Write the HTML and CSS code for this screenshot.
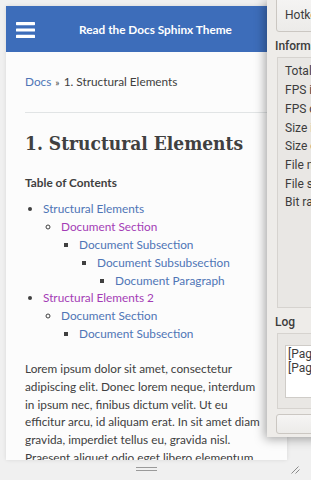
FILE: index.html
```html
<!DOCTYPE html>
<html>
<head>
<meta charset="utf-8">
<link rel="stylesheet" href="styles.css">
</head>
<body>
<div class="frame">
  <div class="page">
    <header class="nav-top">
      <svg class="burger" width="19" height="16" viewBox="0 0 19 16"><rect x="0" y="0" width="19" height="3.2" rx="0.6" fill="#fff"/><rect x="0" y="6.4" width="19" height="3.2" rx="0.6" fill="#fff"/><rect x="0" y="12.8" width="19" height="3.2" rx="0.6" fill="#fff"/></svg>
      <a class="project">Read the Docs Sphinx Theme</a>
    </header>
    <main class="content">
      <div class="breadcrumbs"><a class="link">Docs</a> <span class="raquo">»</span> 1. Structural Elements</div>
      <hr class="rule">
      <h1 class="title">1. Structural Elements</h1>
      <p class="toc-title">Table of Contents</p>
      <ul class="toc l1">
        <li><a class="link">Structural Elements</a>
          <ul class="toc l2">
            <li><a class="visited">Document Section</a>
              <ul class="toc l3">
                <li><a class="link">Document Subsection</a>
                  <ul class="toc l3">
                    <li><a class="link">Document Subsubsection</a>
                      <ul class="toc l3">
                        <li><a class="link">Document Paragraph</a></li>
                      </ul>
                    </li>
                  </ul>
                </li>
              </ul>
            </li>
          </ul>
        </li>
        <li><a class="visited">Structural Elements 2</a>
          <ul class="toc l2">
            <li><a class="link">Document Section</a>
              <ul class="toc l3">
                <li><a class="link">Document Subsection</a></li>
              </ul>
            </li>
          </ul>
        </li>
      </ul>
      <p class="para">Lorem ipsum dolor sit amet, consectetur adipiscing elit. Donec lorem neque, interdum in ipsum nec, finibus dictum velit. Ut eu efficitur arcu, id aliquam erat. In sit amet diam gravida, imperdiet tellus eu, gravida nisl. Praesent aliquet odio eget libero elementum, quis rhoncus tellus tincidunt.</p>
    </main>
  </div>
  <div class="statusbar">
    <span class="grip"></span>
    <svg class="resize" width="9" height="8" viewBox="0 0 9 8"><line x1="0.5" y1="7.5" x2="7.5" y2="0.5" stroke="#8a8a8a" stroke-width="1"/><line x1="4.5" y1="7.5" x2="8.5" y2="3.5" stroke="#8a8a8a" stroke-width="1"/></svg>
  </div>
</div>
<aside class="panel">
  <div class="btn hotkeys">Hotkeys</div>
  <div class="group-label">Information</div>
  <div class="group info">
    <div class="row">Total frames</div>
    <div class="row">FPS in</div>
    <div class="row">FPS out</div>
    <div class="row">Size in</div>
    <div class="row">Size out</div>
    <div class="row">File name</div>
    <div class="row">File size</div>
    <div class="row">Bit rate</div>
  </div>
  <div class="group-label">Log</div>
  <div class="group log">
    <div class="log-text">[Page loaded]<br>[Page rendered]</div>
  </div>
  <div class="btn bottom-btn"></div>
</aside>
</body>
</html>
```
FILE: styles.css
```css
html, body {
  margin: 0;
  padding: 0;
  overflow: hidden;
}
body {
  width: 311px;
  height: 480px;
  background: #f0f0f0;
  font-family: Lato, "Noto Sans", sans-serif;
  color: #404040;
  position: relative;
}
.frame {
  display: flex;
  flex-direction: column;
  padding: 6px 24px 0 6px;
  height: 480px;
  box-sizing: border-box;
}
.page {
  height: 454px;
  background: #fcfcfc;
  overflow: hidden;
  box-shadow: 0 0 4px rgba(0,0,0,0.10);
}
.nav-top {
  height: 46px;
  background: #3d6dba;
  display: flex;
  align-items: center;
  padding: 0 11px 0 10px;
}
.burger {
  display: block;
  margin-top: 1px;
}
.project {
  flex: 1;
  text-align: center;
  color: #fff;
  font-weight: 700;
  font-size: 11.8px;
}
.content {
  padding: 21px 23.5px 0 19px;
  font-size: 11.8px;
}
.breadcrumbs {
  line-height: 18px;
  white-space: nowrap;
}
.raquo {
  font-size: 10px;
  margin: 0 1px;
}
.link { color: #4f75b6; }
.visited { color: #a43cb6; }
.rule {
  border: 0;
  border-top: 1px solid #e1e4e5;
  margin: 21px -23.5px 0 0;
  height: 0;
}
.title {
  margin: 16px 0 0 0;
  font-family: "DejaVu Serif Condensed", "DejaVu Serif", serif;
  font-stretch: condensed;
  font-weight: 700;
  font-size: 19px;
  line-height: 28px;
  color: #404040;
  white-space: nowrap;
}
.toc-title {
  margin: 17px 0 0 0;
  font-weight: 700;
  line-height: 18px;
}
.toc {
  margin: 0;
  padding-left: 18px;
  line-height: 17.8px;
  white-space: nowrap;
}
.toc.l1 { margin-top: 8.4px; list-style: disc; }
.toc.l2 { list-style: circle; }
.toc.l3 { list-style: square; }
.para {
  margin: 17.2px 0 0 0;
  line-height: 17.8px;
}
.statusbar {
  height: 20px;
  display: flex;
  align-items: center;
  justify-content: center;
  position: relative;
}
.grip {
  width: 21px;
  height: 2px;
  border-top: 1px solid #9a9a9a;
  border-bottom: 1px solid #9a9a9a;
  margin-top: -2px;
}
.resize {
  position: absolute;
  right: -13px;
  top: 6px;
}
.panel {
  position: absolute;
  left: 267px;
  top: 0;
  width: 80px;
  height: 437px;
  box-sizing: border-box;
  background: #eeece9;
  box-shadow: -2px 2px 10px rgba(0,0,0,0.35);
  padding: 0 0 0 8px;
  font-family: Roboto, "Noto Sans", sans-serif;
  font-size: 12px;
  color: #3c3c3c;
  white-space: nowrap;
  overflow: hidden;
}
.btn {
  box-sizing: border-box;
  border: 1px solid #cbc7c2;
  border-radius: 3px;
  background: linear-gradient(#f6f5f4, #ecebe9);
  margin-left: 1px;
  padding-left: 8px;
}
.hotkeys {
  margin-top: -6px;
  height: 38px;
  line-height: 40px;
}
.group-label {
  margin-top: 6px;
  line-height: 17px;
  font-weight: 500;
}
.group {
  box-sizing: border-box;
  margin-left: 2px;
  border: 1px solid #d6d3cf;
  background: #e9e7e4;
}
.info {
  margin-top: 2px;
  height: 251px;
  padding: 4.4px 0 0 7px;
}
.row {
  line-height: 18.7px;
}
.log {
  margin-top: 2px;
  height: 76px;
  padding: 11px 0 0 7px;
}
.log-text {
  height: 53px;
  background: #ffffff;
  border: 1px solid #cfccc8;
  box-sizing: border-box;
  padding: 2px 0 0 2px;
  line-height: 13.5px;
}
.bottom-btn {
  margin-top: 5px;
  height: 20px;
}
```
